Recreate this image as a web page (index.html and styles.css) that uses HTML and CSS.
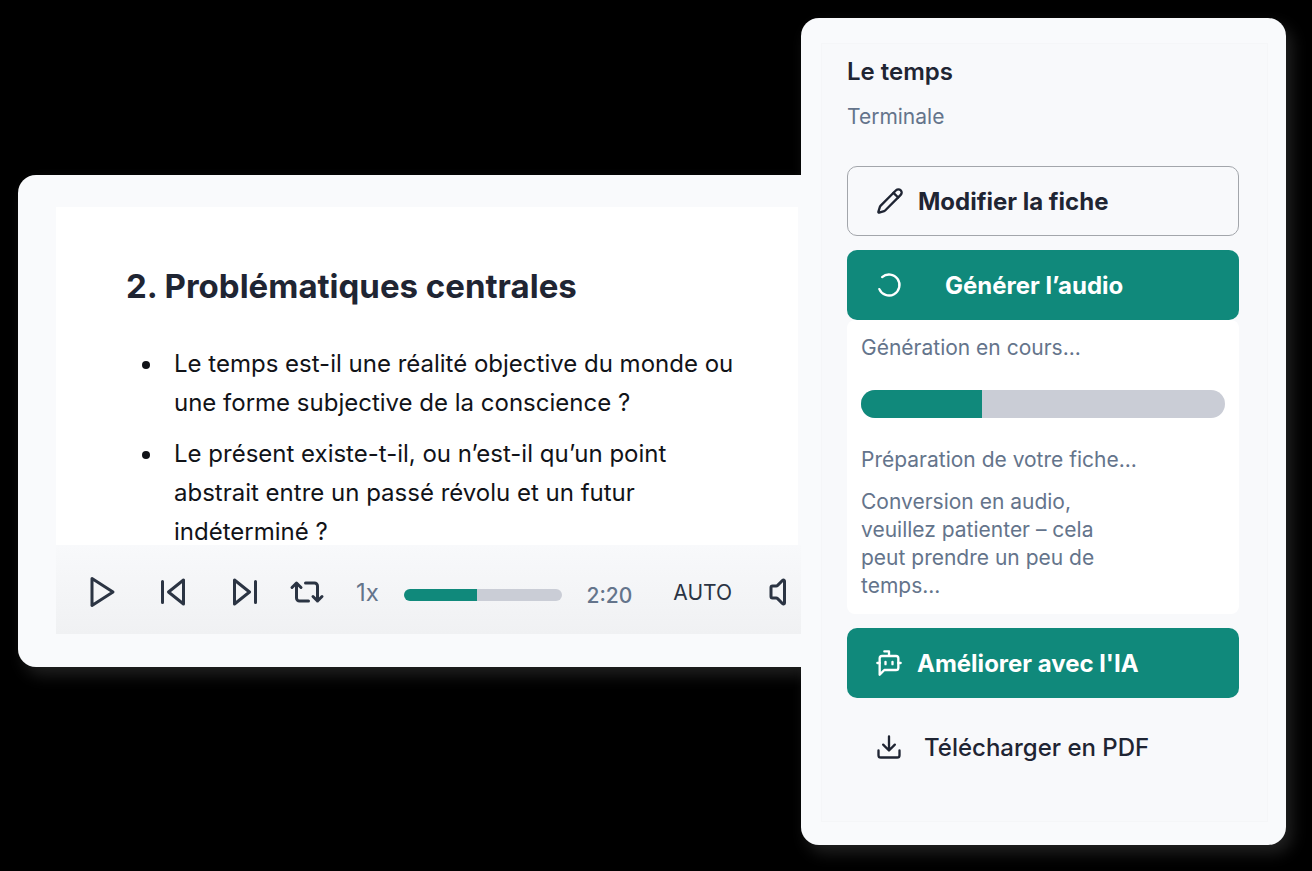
FILE: index.html
```html
<!DOCTYPE html>
<html lang="fr">
  <head>
    <meta charset="UTF-8" />
    <meta name="viewport" content="width=device-width, initial-scale=1.0" />
    <title>Le temps</title>
    <link rel="stylesheet" href="styles.css">
  </head>
  <body>
    <main class="page">
      <section class="card reader">
        <article class="sheet">
          <h1>2. Problématiques centrales</h1>
          <ul>
            <li>Le temps est-il une réalité objective du monde ou une forme subjective de la conscience ?</li>
            <li>Le présent existe-t-il, ou n’est-il qu’un point abstrait entre un passé révolu et un futur indéterminé ?</li>
          </ul>
        </article>

        <div class="player">
          <div class="transport">
            <button type="button" aria-label="Lecture">
              <svg class="icon" viewBox="0 0 24 24"><path d="M6 3l14 9-14 9z" /></svg>
            </button>
            <button type="button" aria-label="Précédent">
              <svg class="icon" viewBox="0 0 24 24"><path d="M19 20L9 12l10-8zM5 19V5" /></svg>
            </button>
            <button type="button" aria-label="Suivant">
              <svg class="icon" viewBox="0 0 24 24"><path d="M5 4l10 8-10 8zM19 5v14" /></svg>
            </button>
          </div>
          <button type="button" aria-label="Répéter">
            <svg class="icon" viewBox="0 0 24 24">
              <path d="m2 9 3-3 3 3M13 18H7a2 2 0 0 1-2-2V6" />
              <path d="m22 15-3 3-3-3M11 6h6a2 2 0 0 1 2 2v10" />
            </svg>
          </button>
          <button type="button" class="speed">1x</button>
          <div class="timeline">
            <input type="range" class="seek" min="0" max="100" value="46" aria-label="Position" />
            <span class="time">2:20</span>
          </div>
          <button type="button" class="auto">AUTO</button>
          <button type="button" aria-label="Volume">
            <svg class="icon volume" viewBox="0 0 12 24">
              <path d="M11 4.702a.705.705 0 0 0-1.203-.498L6.413 7.587A1.4 1.4 0 0 1 5.416 8H3a1 1 0 0 0-1 1v6a1 1 0 0 0 1 1h2.416a1.4 1.4 0 0 1 .997.413l3.383 3.384A.705.705 0 0 0 11 19.298z" />
            </svg>
          </button>
        </div>
      </section>

      <aside class="card side">
        <div class="panel">
          <h2>Le temps</h2>
          <p class="level">Terminale</p>

          <button type="button" class="btn outline">
            <svg class="icon" viewBox="0 0 24 24">
              <path d="M21.174 6.812a1 1 0 0 0-3.986-3.987L3.842 16.174a2 2 0 0 0-.5.83l-1.321 4.352a.5.5 0 0 0 .623.622l4.353-1.32a2 2 0 0 0 .83-.497z" />
              <path d="m15 5 4 4" />
            </svg>
            Modifier la fiche
          </button>

          <button type="button" class="btn primary loading">
            <svg class="icon" viewBox="0 0 24 24">
              <path d="M21 12a9 9 0 1 1-6.219-8.56" transform="rotate(-131 12 12)" />
            </svg>
            Générer l’audio
          </button>
          <div class="status">
            <label for="generation">Génération en cours...</label>
            <progress id="generation" value="1" max="3"></progress>
            <p>Préparation de votre fiche...</p>
            <p class="note">Conversion en audio, veuillez patienter – cela peut prendre un peu de temps...</p>
          </div>

          <button type="button" class="btn primary">
            <svg class="icon" viewBox="0 0 24 24">
              <path d="M12 6V2H8M8 18l-4 4V8a2 2 0 0 1 2-2h12a2 2 0 0 1 2 2v8a2 2 0 0 1-2 2Z" />
              <path d="M2 12h2M9 11v2M15 11v2M20 12h2" />
            </svg>
            Améliorer avec l'IA
          </button>

          <button type="button" class="btn plain">
            <svg class="icon" viewBox="0 0 24 24">
              <path d="M21 15v4a2 2 0 0 1-2 2H5a2 2 0 0 1-2-2v-4M7 10l5 5 5-5M12 15V3" />
            </svg>
            Télécharger en PDF
          </button>
        </div>
      </aside>
    </main>
  </body>
</html>
```

FILE: styles.css
```css
* {
  box-sizing: border-box;
}
body {
  margin: 0;
  background-color: #000;
  color: #1f2533;
  font-family: Inter, "Liberation Sans", sans-serif;
}
h1,
h2,
p,
ul {
  margin: 0;
}
button {
  padding: 0;
  border: none;
  background: none;
  color: inherit;
  font-family: inherit;
  cursor: pointer;
}
.page {
  display: grid;
  grid-template-columns: minmax(0, 1fr) 485px;
  align-items: start;
  padding: 18px 26px 26px 18px;
}
.card {
  background-color: #f9fafc;
  border-radius: 18px;
  box-shadow: 6px 8px 16px rgba(255, 255, 255, 0.13);
}
.icon {
  display: block;
  width: 36px;
  height: 36px;
  flex: none;
  fill: none;
  stroke: currentColor;
  stroke-width: 2;
  stroke-linecap: round;
  stroke-linejoin: round;
}

/* reader */
.reader {
  margin-top: 157px;
  padding: 32px 0 33px 38px;
  border-radius: 18px 0 0 18px;
}
.sheet {
  margin-right: 3px;
  padding: 56px 60px 0 70px;
  background-color: #fff;
}
h1 {
  font-size: 33px;
  line-height: 46px;
  font-weight: 700;
}
ul {
  margin-top: 35px;
  padding-left: 38px;
  color: #111318;
  font-size: 24px;
  line-height: 39px;
}
li {
  padding-left: 10px;
}
li + li {
  margin-top: 12px;
}
.player {
  position: relative;
  display: flex;
  align-items: center;
  height: 89px;
  margin-top: -6px;
  padding: 5px 15px 0 27px;
  background: linear-gradient(#f8f9fb, #f0f1f3);
  color: #2b3443;
}
.transport {
  display: flex;
  gap: 36px;
  margin-right: 26px;
}
.speed {
  margin: 0 25px 0 31px;
  color: #64748b;
  font-size: 24px;
}
.timeline {
  display: flex;
  flex: 1;
  align-items: center;
  gap: 24px;
  padding-top: 6px;
}
.seek {
  appearance: none;
  flex: 1;
  min-width: 0;
  height: 12px;
  margin: 0;
  border-radius: 6px;
  background: linear-gradient(to right, #10897b 46%, #cacdd6 46%);
}
.seek::-webkit-slider-thumb {
  appearance: none;
  width: 0;
  height: 0;
}
.time {
  color: #64748b;
  font-size: 21px;
  font-weight: 500;
}
.auto {
  margin: 0 36px 0 41px;
  font-size: 21px;
}
.volume {
  width: 18px;
}

/* side panel */
.side {
  padding: 25px 18px 23px 20px;
}
.panel {
  padding: 14px 28px 39px 25px;
  border: 1px solid #f5f6f8;
  background-color: #f8f9fb;
}
h2 {
  font-size: 24px;
  line-height: 28px;
  font-weight: 600;
}
.level {
  margin: 17px 0 35px;
  color: #64748b;
  font-size: 21px;
  line-height: 28px;
}
.btn {
  display: flex;
  align-items: center;
  gap: 14px;
  width: 100%;
  height: 70px;
  padding: 0 28px;
  border-radius: 10px;
  font-size: 24px;
  font-weight: 700;
}
.btn + .btn,
.status + .btn {
  margin-top: 14px;
}
.btn .icon {
  width: 28px;
  height: 28px;
}
.outline {
  border: 1px solid #a3a6ab;
}
.primary {
  background-color: #10897b;
  color: #fff;
}
.loading {
  gap: 42px;
}
.plain {
  gap: 21px;
  font-weight: 500;
}
.status {
  padding: 14px;
  border-radius: 8px;
  background-color: #fff;
  color: #64748b;
  font-size: 21px;
  line-height: 28px;
}
.status label {
  display: block;
}
progress {
  appearance: none;
  display: block;
  width: 100%;
  height: 28px;
  margin: 28px 0;
  border: none;
  border-radius: 14px;
  overflow: hidden;
}
progress::-webkit-progress-bar {
  background-color: #cacdd6;
}
progress::-webkit-progress-value {
  background-color: #10897b;
}
.note {
  max-width: 252px;
  margin-top: 14px;
}
```
